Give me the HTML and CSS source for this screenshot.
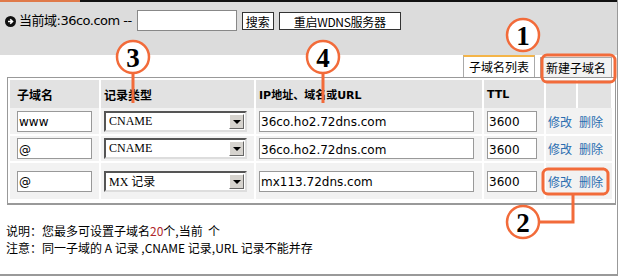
FILE: index.html
```html
<!DOCTYPE html>
<html lang="zh">
<head>
  <meta charset="UTF-8" />
  <title>子域名管理</title>
  <link rel="stylesheet" href="styles.css">
</head>
<body>
  <div class="page">
    <div class="topline"><span class="seg-orange"></span><span class="seg-black"></span></div>

    <div class="domainbar">
      <span class="go-icon">
        <svg width="11" height="11" viewBox="0 0 11 11"><circle cx="5.5" cy="5.5" r="5.5" fill="#111"/><path d="M3 5.5h4.5M5.2 3.2l2.3 2.3-2.3 2.3" stroke="#fff" stroke-width="1.6" fill="none"/></svg>
      </span>
      <span class="domain-label">当前域:36co.com --</span>
      <input type="text" class="search-input" />
      <button class="btn">搜索</button>
      <button class="btn btn-wide">重启WDNS服务器</button>
    </div>

    <div class="tabs">
      <span class="tab active">子域名列表</span>
      <span class="tab">新建子域名</span>
    </div>

    <div class="listbox">
      <table class="records">
        <thead>
          <tr>
            <th class="c-name">子域名</th>
            <th class="c-type">记录类型</th>
            <th class="c-ip">IP地址、域名或URL</th>
            <th class="c-ttl">TTL</th>
            <th class="c-act"></th>
            <th class="c-act2"></th>
          </tr>
        </thead>
        <tbody>
          <tr>
            <td><input type="text" class="f-name" value="www" /></td>
            <td><div class="sel"><span class="sel-text">CNAME</span><span class="sel-btn"></span></div></td>
            <td><input type="text" class="f-ip" value="36co.ho2.72dns.com" /></td>
            <td><input type="text" class="f-ttl" value="3600" /></td>
            <td><a class="lnk">修改</a></td>
            <td><a class="lnk">删除</a></td>
          </tr>
          <tr>
            <td><input type="text" class="f-name" value="@" /></td>
            <td><div class="sel"><span class="sel-text">CNAME</span><span class="sel-btn"></span></div></td>
            <td><input type="text" class="f-ip" value="36co.ho2.72dns.com" /></td>
            <td><input type="text" class="f-ttl" value="3600" /></td>
            <td><a class="lnk">修改</a></td>
            <td><a class="lnk">删除</a></td>
          </tr>
          <tr class="last">
            <td><input type="text" class="f-name" value="@" /></td>
            <td><div class="sel"><span class="sel-text">MX 记录</span><span class="sel-btn"></span></div></td>
            <td><input type="text" class="f-ip" value="mx113.72dns.com" /></td>
            <td><input type="text" class="f-ttl" value="3600" /></td>
            <td><a class="lnk">修改</a></td>
            <td><a class="lnk">删除</a></td>
          </tr>
        </tbody>
      </table>
    </div>

    <div class="notes">
      <p>说明：您最多可设置子域名<span class="num">20</span>个,当前&nbsp;&nbsp;个</p>
      <p>注意：同一子域的 A 记录 ,CNAME 记录,URL 记录不能并存</p>
    </div>

    <!-- callouts -->
    <svg class="callouts" width="619" height="278" viewBox="0 0 619 278">
      <g fill="none" stroke="#f26b3a" stroke-width="3">
        <rect x="542" y="55" width="73" height="27" rx="5"/>
        <rect x="543" y="169" width="65" height="25" rx="5"/>
        <line x1="133" y1="73" x2="133" y2="103"/>
        <line x1="323" y1="73" x2="323" y2="103"/>
        <polyline points="539,222 573,222 573,194"/>
      </g>
      <g fill="#fff" stroke="#f26b3a" stroke-width="2.5">
        <circle cx="523" cy="35" r="16"/>
        <circle cx="133" cy="57" r="16"/>
        <circle cx="323" cy="57" r="16"/>
        <circle cx="523" cy="222" r="16"/>
      </g>
      <g font-family="'Liberation Serif', serif" font-size="27" font-weight="bold" text-anchor="middle" fill="#000">
        <text x="523" y="45">1</text>
        <text x="133" y="67">3</text>
        <text x="323" y="67">4</text>
        <text x="523" y="232">2</text>
      </g>
    </svg>
  </div>
</body>
</html>
```

FILE: styles.css
```css
* {
  box-sizing: border-box;
}

body {
  margin: 0;
  background: #fff;
  font-family: 'Noto Sans CJK SC', 'DejaVu Sans', sans-serif;
  font-size: 12px;
  color: #000;
}

.page {
  position: relative;
  width: 618px;
  height: 276px;
  border-right: 1px solid #999;
  border-bottom: 2px solid #999;
}

.topline {
  display: flex;
  height: 2px;
}
.seg-orange {
  width: 80px;
  background: #e07a4a;
}
.seg-black {
  flex: 1;
  background: #111;
}

/* Domain bar */
.domainbar {
  height: 53px;
  background: #dcdcdc;
  display: flex;
  align-items: flex-start;
  padding: 8px 0 0 5px;
}
.go-icon {
  display: flex;
  margin-top: 6px;
  margin-right: 3px;
}
.domain-label {
  font-family: 'DejaVu Sans', 'Noto Sans CJK SC', sans-serif;
  font-size: 13px;
  line-height: 22px;
  margin-right: 5px;
  letter-spacing: -0.5px;
}
.search-input {
  width: 100px;
  height: 21px;
  border: 1px solid #888;
  background: #fff;
  margin: 0 5px 0 0;
}
.btn {
  height: 18px;
  margin: 2px 5px 0 0;
  padding: 0 3px;
  border: 1px solid #333;
  background: #fff;
  font-family: 'Noto Sans CJK SC', sans-serif;
  font-size: 12px;
  line-height: 15px;
  white-space: nowrap;
}
.btn-wide {
  width: 122px;
  padding: 0;
  text-align: center;
  letter-spacing: -0.3px;
}

/* Tabs */
.tabs {
  display: flex;
  justify-content: flex-end;
  align-items: flex-end;
  height: 22px;
  padding-right: 5px;
}
.tab {
  height: 20px;
  padding: 0 5px;
  margin-left: 5px;
  border: 1px solid #aaa;
  border-bottom: none;
  background: #f2f2f2;
  line-height: 19px;
  font-size: 12px;
}
.tab.active {
  background: #fff;
  border-top: 2px solid #f4b448;
  height: 22px;
}

/* Record list */
.listbox {
  margin-left: 7px;
  width: 609px;
  border: 1px solid #999;
  border-bottom: 2px solid #999;
  padding: 2px 2px 4px 2px;
  background: #fff;
}
.records {
  width: 100%;
  border-collapse: collapse;
  table-layout: fixed;
}
.records th {
  background: #e2e2e2;
  height: 28px;
  text-align: left;
  font-weight: bold;
  font-size: 12px;
  padding: 0 0 0 3px;
  border-right: 2px solid #fff;
}
.records th.c-name {
  padding-left: 7px;
}
.records th.c-ip,
.records th.c-ttl {
  font-family: 'DejaVu Sans', 'Noto Sans CJK SC', sans-serif;
  font-size: 11px;
}
.records td {
  background: #f2f2f2;
  height: 27px;
  padding: 0 0 0 3px;
  border-right: 2px solid #fff;
  border-bottom: 2px solid #fff;
  white-space: nowrap;
}
.records td:first-child {
  padding-left: 7px;
}
.records tr.last td {
  height: 37px;
  border-bottom: none;
}
.records td:nth-child(5),
.records td:nth-child(6) {
  padding-left: 2px;
  border-right: none;
}
.c-name { width: 90px; }
.c-type { width: 155px; }
.c-ip { width: 228px; }
.c-ttl { width: 62px; }
.c-act { width: 32px; }

.records input {
  height: 21px;
  border: 1px solid #999;
  background: #fff;
  font-family: 'DejaVu Sans', sans-serif;
  font-size: 12px;
  padding: 2px 1px 0;
  color: #000;
  vertical-align: middle;
}
.f-name { width: 75px; }
.f-ip { width: 215px; }
.f-ttl { width: 50px; }

.sel {
  display: flex;
  width: 143px;
  height: 21px;
  border: 2px solid;
  border-color: #555 #ddd #ddd #555;
  background: #fff;
  align-items: center;
}
.sel-text {
  flex: 1;
  padding-left: 3px;
  font-family: 'Liberation Serif', 'Noto Sans CJK SC', serif;
  font-size: 12px;
}
.sel-btn {
  position: relative;
  width: 15px;
  height: 15px;
  margin-right: 1px;
  background: #d6d3ce;
  border: 1px solid;
  border-color: #fff #666 #666 #fff;
}
.sel-btn::after {
  content: "";
  position: absolute;
  left: 3px;
  top: 5px;
  border-left: 4px solid transparent;
  border-right: 4px solid transparent;
  border-top: 4px solid #000;
}

.lnk {
  color: #2a6db0;
  font-size: 12px;
}

/* Notes */
.notes {
  margin-top: 17px;
  padding-left: 6px;
}
.notes p {
  margin: 0;
  height: 17px;
  line-height: 17px;
  font-size: 12px;
  white-space: nowrap;
}
.num {
  color: #b0282a;
}

.callouts {
  position: absolute;
  top: 0;
  left: 0;
  pointer-events: none;
}
```
